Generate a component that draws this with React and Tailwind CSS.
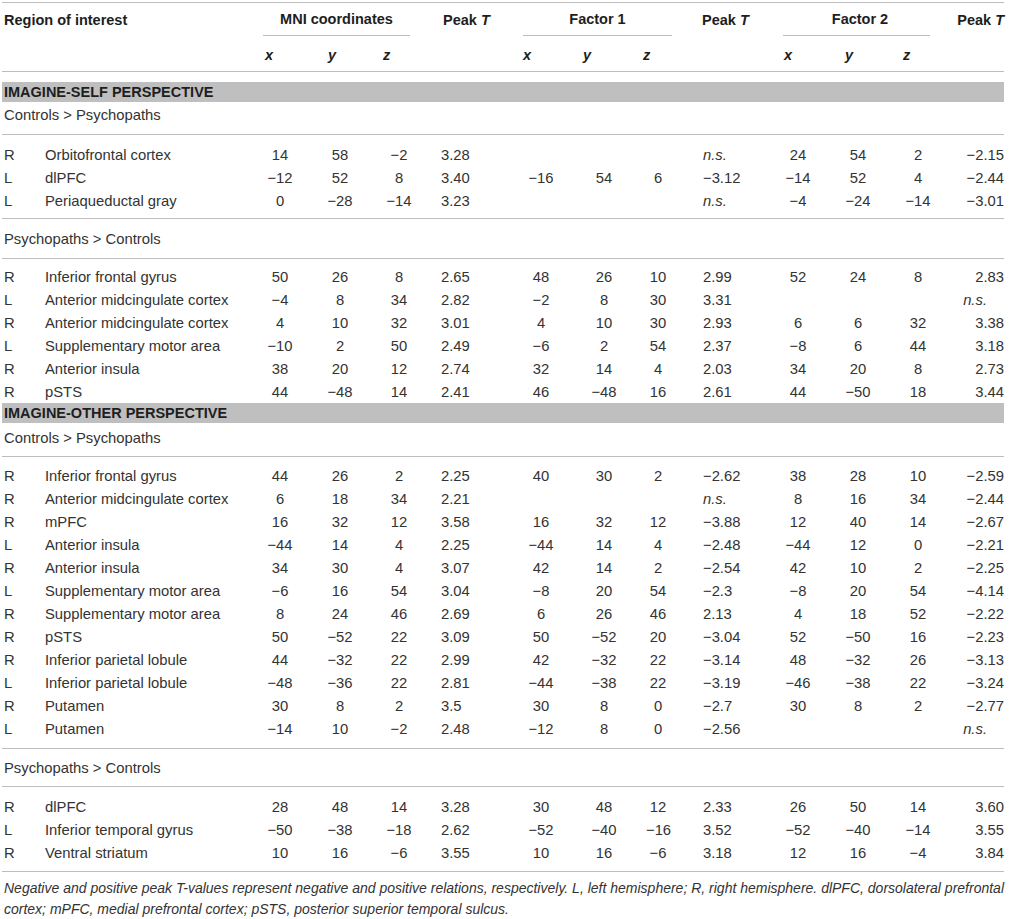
import React from "react";

const F = { fontFamily: '"Liberation Sans", Arial, Helvetica, sans-serif' };

const M = "\u2212";
const NS = "n.s.";

const selfDown = [
  ["R", "Orbitofrontal cortex", "14", "58", M + "2", "3.28", "", "", "", NS, "24", "54", "2", M + "2.15"],
  ["L", "dlPFC", M + "12", "52", "8", "3.40", M + "16", "54", "6", M + "3.12", M + "14", "52", "4", M + "2.44"],
  ["L", "Periaqueductal gray", "0", M + "28", M + "14", "3.23", "", "", "", NS, M + "4", M + "24", M + "14", M + "3.01"],
];

const selfUp = [
  ["R", "Inferior frontal gyrus", "50", "26", "8", "2.65", "48", "26", "10", "2.99", "52", "24", "8", "2.83"],
  ["L", "Anterior midcingulate cortex", M + "4", "8", "34", "2.82", M + "2", "8", "30", "3.31", "", "", "", NS],
  ["R", "Anterior midcingulate cortex", "4", "10", "32", "3.01", "4", "10", "30", "2.93", "6", "6", "32", "3.38"],
  ["L", "Supplementary motor area", M + "10", "2", "50", "2.49", M + "6", "2", "54", "2.37", M + "8", "6", "44", "3.18"],
  ["R", "Anterior insula", "38", "20", "12", "2.74", "32", "14", "4", "2.03", "34", "20", "8", "2.73"],
  ["R", "pSTS", "44", M + "48", "14", "2.41", "46", M + "48", "16", "2.61", "44", M + "50", "18", "3.44"],
];

const otherDown = [
  ["R", "Inferior frontal gyrus", "44", "26", "2", "2.25", "40", "30", "2", M + "2.62", "38", "28", "10", M + "2.59"],
  ["R", "Anterior midcingulate cortex", "6", "18", "34", "2.21", "", "", "", NS, "8", "16", "34", M + "2.44"],
  ["R", "mPFC", "16", "32", "12", "3.58", "16", "32", "12", M + "3.88", "12", "40", "14", M + "2.67"],
  ["L", "Anterior insula", M + "44", "14", "4", "2.25", M + "44", "14", "4", M + "2.48", M + "44", "12", "0", M + "2.21"],
  ["R", "Anterior insula", "34", "30", "4", "3.07", "42", "14", "2", M + "2.54", "42", "10", "2", M + "2.25"],
  ["L", "Supplementary motor area", M + "6", "16", "54", "3.04", M + "8", "20", "54", M + "2.3", M + "8", "20", "54", M + "4.14"],
  ["R", "Supplementary motor area", "8", "24", "46", "2.69", "6", "26", "46", "2.13", "4", "18", "52", M + "2.22"],
  ["R", "pSTS", "50", M + "52", "22", "3.09", "50", M + "52", "20", M + "3.04", "52", M + "50", "16", M + "2.23"],
  ["R", "Inferior parietal lobule", "44", M + "32", "22", "2.99", "42", M + "32", "22", M + "3.14", "48", M + "32", "26", M + "3.13"],
  ["L", "Inferior parietal lobule", M + "48", M + "36", "22", "2.81", M + "44", M + "38", "22", M + "3.19", M + "46", M + "38", "22", M + "3.24"],
  ["R", "Putamen", "30", "8", "2", "3.5", "30", "8", "0", M + "2.7", "30", "8", "2", M + "2.77"],
  ["L", "Putamen", M + "14", "10", M + "2", "2.48", M + "12", "8", "0", M + "2.56", "", "", "", NS],
];

const otherUp = [
  ["R", "dlPFC", "28", "48", "14", "3.28", "30", "48", "12", "2.33", "26", "50", "14", "3.60"],
  ["L", "Inferior temporal gyrus", M + "50", M + "38", M + "18", "2.62", M + "52", M + "40", M + "16", "3.52", M + "52", M + "40", M + "14", "3.55"],
  ["R", "Ventral striatum", "10", "16", M + "6", "3.55", "10", "16", M + "6", "3.18", "12", "16", M + "4", "3.84"],
];

const Line = () => <div className="h-px bg-[#bdbdbd]" />;

const Cell = ({ v, i }) => {
  const ns = v === NS;
  if (i === 0) return <div className="pl-[2px]">{v}</div>;
  if (i === 1) return <div className="whitespace-nowrap">{v}</div>;
  if (i === 5) return <div className={"pl-[13px]" + (ns ? " italic" : "")}>{v}</div>;
  if (i === 9) return <div className={"pl-[33px]" + (ns ? " italic" : "")}>{v}</div>;
  if (i === 13)
    return <div className={"text-right" + (ns ? " italic pr-[17px]" : "")}>{v}</div>;
  return <div className="text-center">{v}</div>;
};

const Row = ({ r }) => (
  <div className="grid h-[23px] grid-cols-[43px_205px_60px_60px_58px_92px_42px_84px_24px_110px_36px_84px_36px_68px] items-center">
    {r.map((v, i) => (
      <Cell key={i} v={v} i={i} />
    ))}
  </div>
);

const Rows = ({ rows, top, bottom }) => (
  <div className={top + " " + bottom}>
    {rows.map((r, i) => (
      <Row key={i} r={r} />
    ))}
  </div>
);

const Band = ({ children }) => (
  <div className="flex h-[20px] items-center bg-[#bfbfbf] pl-[2px] text-[14.5px] font-bold text-[#1e1e1e]">
    {children}
  </div>
);

const PeakT = () => (
  <>
    Peak <i className="ml-[4px]">T</i>
  </>
);

export default function App() {
  return (
    <div className="min-h-[919px] w-[1014px] bg-white pt-[2px] text-[14.8px] leading-[18px] text-[#333]" style={F}>
      <div className="ml-[2px] w-[1002px]">
        <Line />
        {/* group headers */}
        <div className="flex h-[33px] text-[14.5px] font-bold text-[#1e1e1e]">
          <div className="flex w-[261px] items-center pl-[2px]">Region of interest</div>
          <div className="flex w-[147px] items-center justify-center border-b border-[#bdbdbd]">MNI coordinates</div>
          <div className="flex w-[113px] items-center pl-[33px]">
            <PeakT />
          </div>
          <div className="flex w-[149px] items-center justify-center border-b border-[#bdbdbd]">Factor 1</div>
          <div className="flex w-[111px] items-center pl-[30px]">
            <PeakT />
          </div>
          <div className="flex w-[147px] items-center justify-center border-b border-[#bdbdbd] pl-[7px]">Factor 2</div>
          <div className="flex flex-1 items-center justify-end">
            <PeakT />
          </div>
        </div>
        {/* axis headers */}
        <div className="grid h-[35px] grid-cols-[263px_63px_55px_140px_60px_60px_141px_61px_58px_1fr] items-center pt-[3px] text-[14.5px] font-bold italic text-[#1e1e1e]">
          <div />
          <div>x</div>
          <div>y</div>
          <div>z</div>
          <div>x</div>
          <div>y</div>
          <div>z</div>
          <div>x</div>
          <div>y</div>
          <div>z</div>
        </div>
        <Line />
        <div className="h-[10px]" />

        <Band>IMAGINE-SELF PERSPECTIVE</Band>
        <div className="h-[32px] pl-[2px] pt-[4px]">Controls &gt; Psychopaths</div>
        <Line />
        <Rows rows={selfDown} top="pt-[8px]" bottom="pb-[6px]" />
        <Line />
        <div className="flex h-[39px] items-center pl-[2px]">Psychopaths &gt; Controls</div>
        <Line />
        <Rows rows={selfUp} top="pt-[6px]" bottom="pb-0" />

        <Band>IMAGINE-OTHER PERSPECTIVE</Band>
        <div className="h-[33px] pl-[2px] pt-[6px]">Controls &gt; Psychopaths</div>
        <Line />
        <Rows rows={otherDown} top="pt-[7px]" bottom="pb-[8px]" />
        <Line />
        <div className="flex h-[37px] items-center pl-[2px]">Psychopaths &gt; Controls</div>
        <Line />
        <Rows rows={otherUp} top="pt-[8px]" bottom="pb-[7px]" />
        <Line />

        <div className="pl-[2px] pt-[6px] text-[14px] italic leading-[21px] text-[#333]">
          <div className="text-justify [text-align-last:justify]">
            Negative and positive peak T-values represent negative and positive relations, respectively. L, left hemisphere; R, right hemisphere. dlPFC, dorsolateral prefrontal
          </div>
          <div>cortex; mPFC, medial prefrontal cortex; pSTS, posterior superior temporal sulcus.</div>
        </div>
      </div>
    </div>
  );
}
